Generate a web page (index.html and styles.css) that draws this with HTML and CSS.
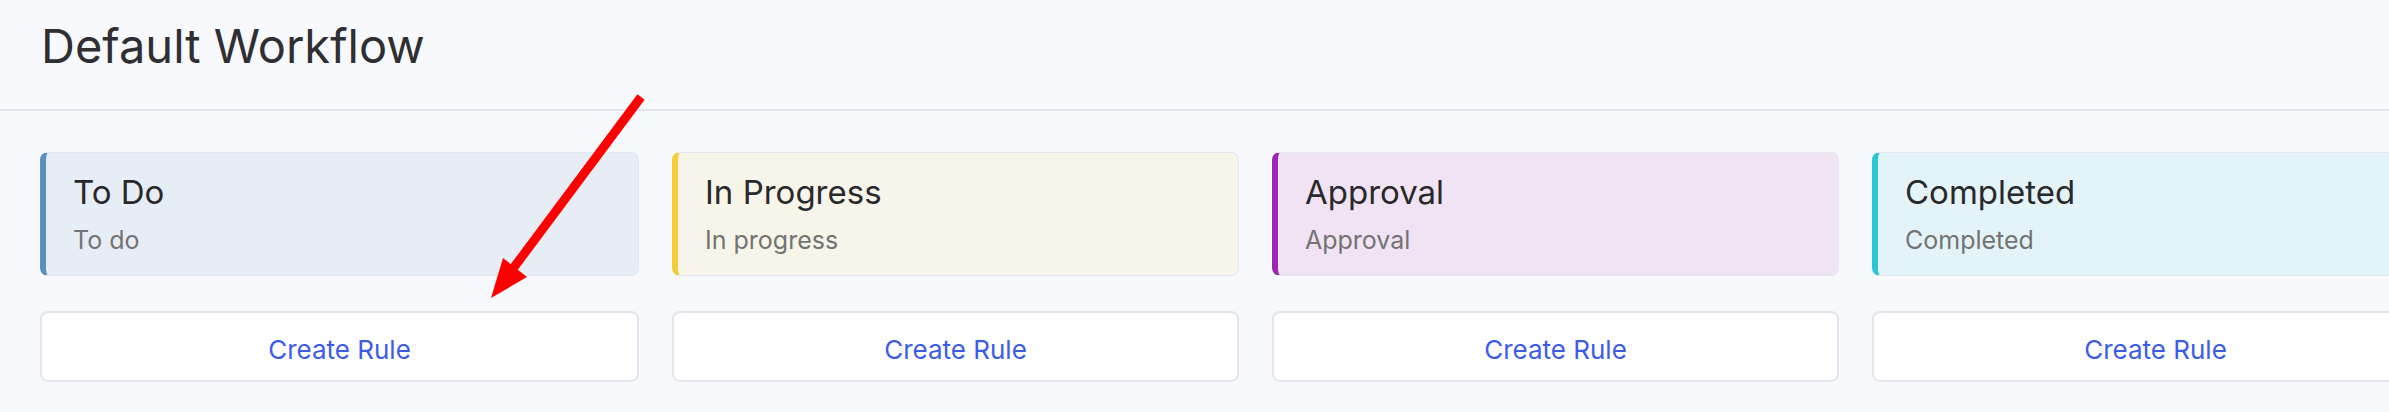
FILE: index.html
```html
<!DOCTYPE html>
<html lang="en">
<head>
<meta charset="utf-8">
<title>Default Workflow</title>
<link rel="stylesheet" href="styles.css">
</head>
<body>
<header class="page-header">
  <h1 class="page-title">Default Workflow</h1>
</header>
<main class="board">
  <section class="column column-wide">
    <div class="status-card status-todo">
      <div class="status-name">To Do</div>
      <div class="status-desc">To do</div>
    </div>
    <button class="rule-btn">Create Rule</button>
  </section>
  <section class="column">
    <div class="status-card status-progress">
      <div class="status-name">In Progress</div>
      <div class="status-desc">In progress</div>
    </div>
    <button class="rule-btn">Create Rule</button>
  </section>
  <section class="column">
    <div class="status-card status-approval">
      <div class="status-name">Approval</div>
      <div class="status-desc">Approval</div>
    </div>
    <button class="rule-btn">Create Rule</button>
  </section>
  <section class="column">
    <div class="status-card status-completed">
      <div class="status-name">Completed</div>
      <div class="status-desc">Completed</div>
    </div>
    <button class="rule-btn">Create Rule</button>
  </section>
</main>
<svg class="annotation-arrow" width="2389" height="412" viewBox="0 0 2389 412" aria-hidden="true">
  <line x1="641" y1="97" x2="512" y2="270" stroke="#ff0000" stroke-width="9" stroke-linecap="butt"/>
  <polygon points="491,298 503,258 527,277" fill="#ff0000"/>
</svg>
</body>
</html>
```

FILE: styles.css
```css
html, body {
  margin: 0;
  padding: 0;
}
body {
  background: #f8f9fc;
  font-family: Inter, "Noto Sans", sans-serif;
  width: 2389px;
  height: 412px;
  overflow: hidden;
  position: relative;
}
.page-header {
  height: 111px;
  box-sizing: border-box;
  padding: 17px 41px 0;
  border-bottom: 2px solid #e4e6ef;
}
.page-title {
  margin: 0;
  font-size: 47px;
  line-height: 58px;
  font-weight: 400;
  color: #2f2f33;
}
.board {
  display: flex;
  gap: 33px;
  padding: 41px 0 0 40px;
  width: max-content;
}
.column {
  display: flex;
  flex-direction: column;
  gap: 35px;
  width: 567px;
  flex-shrink: 0;
}
.column-wide {
  width: 599px;
}
.status-card {
  box-sizing: border-box;
  height: 124px;
  padding: 19px 20px 0 27px;
  border: 1px solid #e3e6ee;
  border-left: 6px solid #5a8fc2;
  border-radius: 8px;
}
.status-todo { background: #e7edf5; border-left-color: #5a8fc2; }
.status-progress { background: #f7f5e9; border-left-color: #f4cc3a; }
.status-approval { background: #f0e4f4; border-left-color: #9c27b0; }
.status-completed { background: #e3f3f8; border-left-color: #2bc6d4; }
.status-name {
  font-size: 33px;
  line-height: 40px;
  color: #29292b;
}
.status-desc {
  margin-top: 13px;
  font-size: 25px;
  line-height: 31px;
  color: #737373;
}
.rule-btn {
  box-sizing: border-box;
  height: 71px;
  background: #ffffff;
  border: 2px solid #e4e6ef;
  border-radius: 8px;
  font-family: Inter, "Noto Sans", sans-serif;
  font-size: 26px;
  color: #3d5ce6;
  cursor: pointer;
  padding: 6px 0 0;
}
.annotation-arrow {
  position: absolute;
  left: 0;
  top: 0;
  pointer-events: none;
}
```
